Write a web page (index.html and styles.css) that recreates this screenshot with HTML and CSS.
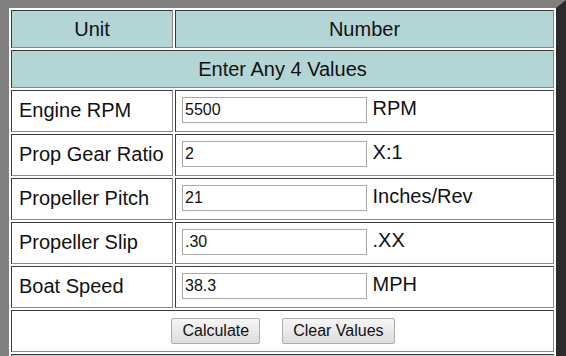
FILE: index.html
```html
<!DOCTYPE html>
<html>
<head>
<meta charset="utf-8">
<title>Prop Slip Calculator</title>
<link rel="stylesheet" href="styles.css">
</head>
<body>
<table class="calc">
  <thead>
    <tr class="head-row">
      <th class="col-unit">Unit</th>
      <th class="col-num">Number</th>
    </tr>
    <tr class="head-row">
      <th colspan="2">Enter Any 4 Values</th>
    </tr>
  </thead>
  <tbody>
    <tr class="data-row">
      <td class="label">Engine RPM</td>
      <td class="value"><input class="field" type="text" value="5500"> RPM</td>
    </tr>
    <tr class="data-row">
      <td class="label">Prop Gear Ratio</td>
      <td class="value"><input class="field" type="text" value="2"> X:1</td>
    </tr>
    <tr class="data-row">
      <td class="label">Propeller Pitch</td>
      <td class="value"><input class="field" type="text" value="21"> Inches/Rev</td>
    </tr>
    <tr class="data-row">
      <td class="label">Propeller Slip</td>
      <td class="value"><input class="field" type="text" value=".30"> .XX</td>
    </tr>
    <tr class="data-row">
      <td class="label">Boat Speed</td>
      <td class="value"><input class="field" type="text" value="38.3"> MPH</td>
    </tr>
    <tr class="data-row">
      <td colspan="2" class="actions">
        <div class="btns">
          <button class="btn" type="button">Calculate</button>
          <button class="btn" type="button">Clear Values</button>
        </div>
      </td>
    </tr>
    <tr class="head-row">
      <th colspan="2">&nbsp;</th>
    </tr>
  </tbody>
</table>
</body>
</html>
```
FILE: styles.css
```css
html, body {
  margin: 0;
  padding: 0;
  background: #ffffff;
}
body {
  font-family: "Liberation Sans", Arial, sans-serif;
  color: #111111;
  overflow: hidden;
}
.calc {
  box-sizing: border-box;
  width: 566px;
  table-layout: fixed;
  border-collapse: separate;
  border-spacing: 2px;
  border-style: solid;
  border-width: 8px 10px 8px 9px;
  border-color: #808080 #2b2b2b #2b2b2b #808080;
  background: #ffffff;
}
.calc th,
.calc td {
  border: 1px solid;
  border-color: #3a3a3a #8a8a8a #8a8a8a #3a3a3a;
  font-size: 20px;
  font-weight: normal;
  color: #111111;
}
.col-unit {
  width: 162px;
  box-sizing: border-box;
}
.head-row th {
  background: #b4d5d5;
  height: 38px;
  box-sizing: border-box;
  padding: 0;
  text-align: center;
  vertical-align: middle;
}
.data-row td {
  height: 42px;
  box-sizing: border-box;
  vertical-align: middle;
}
.label {
  padding: 0 7px 2px;
}
.value {
  padding: 0 6px 2px;
  white-space: nowrap;
}
.field {
  box-sizing: border-box;
  width: 185px;
  height: 26px;
  margin: 0;
  padding: 0 2px;
  border: 1px solid #a9a9a9;
  font-family: "Liberation Sans", Arial, sans-serif;
  font-size: 16px;
  color: #111111;
  vertical-align: baseline;
}
.actions {
  padding: 0;
}
.btns {
  display: flex;
  justify-content: center;
  align-items: center;
  gap: 22px;
  padding-left: 1px;
}
.btn {
  box-sizing: border-box;
  height: 26px;
  padding: 0 10px;
  border: 1px solid #adadad;
  border-radius: 2px;
  background: linear-gradient(#f6f6f6, #dcdcdc);
  font-family: "Liberation Sans", Arial, sans-serif;
  font-size: 16px;
  color: #111111;
}
```
